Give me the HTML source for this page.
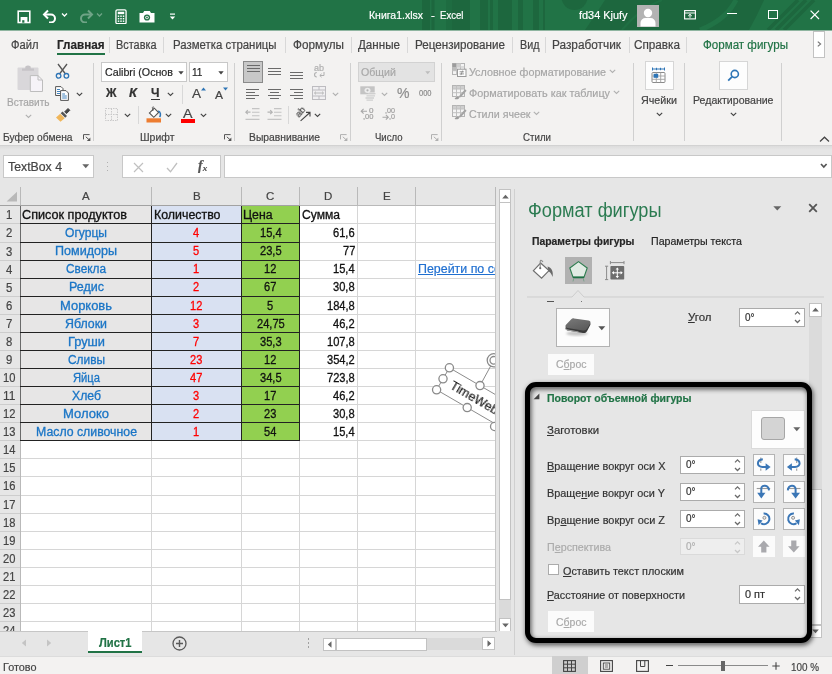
<!DOCTYPE html>
<html lang="ru"><head><meta charset="utf-8"><title>Книга1.xlsx - Excel</title><style>
html,body{margin:0;padding:0}
body{width:832px;height:674px;position:relative;overflow:hidden;background:#e6e6e6;font-family:"Liberation Sans",sans-serif;font-size:11px;color:#444}
.b{position:absolute;box-sizing:border-box;display:block}
.t{position:absolute;white-space:nowrap;line-height:16px;height:16px;transform-origin:0 50%;-webkit-text-stroke:0.2px currentColor}
u{text-decoration:underline;text-underline-offset:1px}
</style></head><body>
<div class="b" style="left:0px;top:0px;width:832px;height:30px;background:#217346;"></div>
<svg class="b" style="left:400px;top:0px;" width="432" height="30" viewBox="0 0 432 30"><g fill="#1d673e"><rect x="22" y="0" width="8" height="30"/><rect x="31.5" y="0" width="3" height="30"/><rect x="46" y="0" width="6" height="30" opacity=".6"/><rect x="52" y="0" width="18" height="30"/><rect x="80" y="0" width="8" height="30"/><rect x="90" y="0" width="3" height="30"/><rect x="98" y="0" width="14" height="30"/><rect x="118" y="0" width="5" height="30"/><rect x="133" y="0" width="6" height="30"/><rect x="143" y="0" width="2" height="30"/><circle cx="174.5" cy="-3" r="13"/><path d="M205 0Q196 14 185 30H349Q357 16 364 0Z"/></g><g fill="none" stroke="#217346"><path d="M300 30Q326 20 336 0" stroke-width="5"/><path d="M222 30Q240 8 262 0" stroke-width="2" opacity=".7"/></g><g fill="none" stroke="#1d673e"><path d="M368 30L398 0M376 30L406 0M384 30L414 0" stroke-width="3.5"/></g></svg>
<svg class="b" style="left:16.5px;top:9.5px;" width="14" height="14" viewBox="0 0 14 14"><rect x="1.2" y="1.2" width="11.6" height="11.3" fill="none" stroke="#fff" stroke-width="1.6"/><rect x="3.6" y="7" width="6.8" height="5.5" fill="#fff"/><rect x="5.2" y="10.2" width="2.2" height="2.5" fill="#217346"/></svg>
<svg class="b" style="left:42px;top:9px;" width="16" height="14" viewBox="0 0 16 14"><path d="M2 5.5H9A4 4 0 0 1 9 13.5H7" fill="none" stroke="#fff" stroke-width="2"/><path d="M6 1.5L2 5.5L6 9.5" fill="none" stroke="#fff" stroke-width="2"/></svg>
<svg class="b" style="left:61px;top:12px;" width="8" height="6" viewBox="0 0 8 6"><path d="M1 1.5L3.5 4L6 1.5" fill="none" stroke="#fff" stroke-width="1.3"/></svg>
<svg class="b" style="left:78px;top:9px;" width="16" height="14" viewBox="0 0 16 14"><g opacity=".35" transform="translate(16,0) scale(-1,1)"><path d="M2 5.5H9A4 4 0 0 1 9 13.5H7" fill="none" stroke="#fff" stroke-width="2"/><path d="M6 1.5L2 5.5L6 9.5" fill="none" stroke="#fff" stroke-width="2"/></g></svg>
<svg class="b" style="left:96px;top:12px;" width="8" height="6" viewBox="0 0 8 6"><path d="M1 1.5L3.5 4L6 1.5" fill="none" stroke="#fff" stroke-width="1.3" opacity=".35"/></svg>
<svg class="b" style="left:114.5px;top:8.5px;" width="12" height="15.7" viewBox="0 0 13 17"><rect x="1" y="1" width="11" height="15" rx="1.5" fill="none" stroke="#fff" stroke-width="1.4"/><rect x="3" y="3" width="7" height="2.6" fill="#fff"/><g fill="#fff"><rect x="3" y="7" width="1.6" height="1.6"/><rect x="5.7" y="7" width="1.6" height="1.6"/><rect x="8.4" y="7" width="1.6" height="1.6"/><rect x="3" y="9.7" width="1.6" height="1.6"/><rect x="5.7" y="9.7" width="1.6" height="1.6"/><rect x="8.4" y="9.7" width="1.6" height="1.6"/><rect x="3" y="12.4" width="1.6" height="1.6"/><rect x="5.7" y="12.4" width="1.6" height="1.6"/><rect x="8.4" y="12.4" width="1.6" height="1.6"/></g></svg>
<svg class="b" style="left:139px;top:10px;" width="16" height="13" viewBox="0 0 16 13"><path d="M0.5 3H4L5.2 1H10.8L12 3H15.5V12.5H0.5Z" fill="#fff"/><circle cx="8" cy="7.5" r="3.1" fill="#217346"/><circle cx="8" cy="7.5" r="1.7" fill="#fff"/><circle cx="8" cy="7.5" r="0.9" fill="#217346"/></svg>
<svg class="b" style="left:169px;top:12.5px;" width="8" height="8" viewBox="0 0 8 8"><rect x="1" y="0.5" width="5" height="1.2" fill="#fff"/><path d="M0.8 3.5H6.2L3.5 6.5Z" fill="#fff"/></svg>
<span class="t" style="left:368.50px;top:7.00px;color:#fff;font-size:11.5px;font-weight:400;transform:scaleX(0.9119);">Книга1.xlsx</span>
<span class="t" style="left:430.50px;top:7.00px;color:#fff;font-size:11.5px;font-weight:400;transform:scaleX(1.0020);">-</span>
<span class="t" style="left:439.50px;top:7.00px;color:#fff;font-size:11.5px;font-weight:400;transform:scaleX(0.8356);">Excel</span>
<span class="t" style="left:578.50px;top:7.00px;color:#fff;font-size:11.5px;font-weight:400;transform:scaleX(0.9481);">fd34 Kjufy</span>
<div class="b" style="left:637px;top:5px;width:21.5px;height:21.5px;background:#b3b3b3;"></div>
<svg class="b" style="left:637px;top:5px;" width="22" height="22" viewBox="0 0 22 22"><circle cx="11" cy="8" r="4.2" fill="#fff"/><path d="M3.5 21.5V18A5 5 0 0 1 8.5 13H13.5A5 5 0 0 1 18.5 18V21.5Z" fill="#fff"/></svg>
<svg class="b" style="left:683.5px;top:9.8px;" width="12" height="10" viewBox="0 0 12 10"><rect x="0.6" y="0.6" width="10.8" height="8.3" fill="none" stroke="#fff" stroke-width="1.1"/><path d="M0.6 3H11.4" stroke="#fff" stroke-width="1"/><path d="M6 7.8V4.4M4.2 6L6 4.3L7.8 6" fill="none" stroke="#fff" stroke-width="1"/></svg>
<div class="b" style="left:727px;top:13px;width:9.5px;height:1.2px;background:#fff;"></div>
<div class="b" style="left:768px;top:10.3px;width:9.8px;height:8.8px;border:1.2px solid #fff;"></div>
<svg class="b" style="left:809px;top:9px;" width="12" height="12" viewBox="0 0 12 12"><path d="M1.6 1.6L10 10M10 1.6L1.6 10" stroke="#fff" stroke-width="1.2"/></svg>
<div class="b" style="left:0px;top:30px;width:832px;height:115px;background:#f3f2f1;"></div>
<div class="b" style="left:0px;top:30px;width:832px;height:1px;background:#8fb5a0;"></div>
<span class="t" style="left:11.00px;top:37.00px;color:#444444;font-size:12px;font-weight:400;transform:scaleX(0.9317);">Файл</span>
<span class="t" style="left:57.00px;top:37.00px;color:#262626;font-size:12px;font-weight:700;transform:scaleX(0.9731);">Главная</span>
<span class="t" style="left:116.00px;top:37.00px;color:#444444;font-size:12px;font-weight:400;transform:scaleX(0.9079);">Вставка</span>
<span class="t" style="left:173.00px;top:37.00px;color:#444444;font-size:12px;font-weight:400;transform:scaleX(0.9506);">Разметка страницы</span>
<span class="t" style="left:293.00px;top:37.00px;color:#444444;font-size:12px;font-weight:400;transform:scaleX(0.9767);">Формулы</span>
<span class="t" style="left:358.00px;top:37.00px;color:#444444;font-size:12px;font-weight:400;transform:scaleX(0.9686);">Данные</span>
<span class="t" style="left:415.00px;top:37.00px;color:#444444;font-size:12px;font-weight:400;transform:scaleX(0.9712);">Рецензирование</span>
<span class="t" style="left:520.00px;top:37.00px;color:#444444;font-size:12px;font-weight:400;transform:scaleX(0.8978);">Вид</span>
<span class="t" style="left:552.00px;top:37.00px;color:#444444;font-size:12px;font-weight:400;transform:scaleX(0.9859);">Разработчик</span>
<span class="t" style="left:634.00px;top:37.00px;color:#444444;font-size:12px;font-weight:400;transform:scaleX(0.9771);">Справка</span>
<span class="t" style="left:703.00px;top:37.00px;color:#217346;font-size:12px;font-weight:400;transform:scaleX(0.9651);">Формат фигуры</span>
<div class="b" style="left:57px;top:53px;width:47.5px;height:2px;background:#217346;"></div>
<div class="b" style="left:109px;top:37px;width:1px;height:16px;background:#d8d8d8;"></div>
<div class="b" style="left:163px;top:37px;width:1px;height:16px;background:#d8d8d8;"></div>
<div class="b" style="left:285px;top:37px;width:1px;height:16px;background:#d8d8d8;"></div>
<div class="b" style="left:351px;top:37px;width:1px;height:16px;background:#d8d8d8;"></div>
<div class="b" style="left:407px;top:37px;width:1px;height:16px;background:#d8d8d8;"></div>
<div class="b" style="left:512px;top:37px;width:1px;height:16px;background:#d8d8d8;"></div>
<div class="b" style="left:545px;top:37px;width:1px;height:16px;background:#d8d8d8;"></div>
<div class="b" style="left:629px;top:37px;width:1px;height:16px;background:#d8d8d8;"></div>
<div class="b" style="left:686px;top:37px;width:1px;height:16px;background:#d8d8d8;"></div>
<div class="b" style="left:813px;top:31px;width:12px;height:27px;background:#fff;border:1px solid #c2c2c2;"></div>
<svg class="b" style="left:817px;top:40.5px;" width="5" height="6" viewBox="0 0 5 6"><path d="M0.8 0.6L3.6 3L0.8 5.4" fill="none" stroke="#777" stroke-width="1.2"/></svg>
<svg class="b" style="left:17px;top:65px;" width="27" height="28" viewBox="0 0 27 28"><rect x="0.5" y="2.5" width="21" height="22.5" rx="1" fill="#d9d7da"/><path d="M5 5.8V3.6H8.3V1.6Q11 -0.6 13.7 1.6V3.6H17V5.8Z" fill="#c6c4c7"/><path d="M13.3 10.6H21L25.5 15V26.5H13.3Z" fill="#f6f3f8" stroke="#bdbdbd" stroke-width="1"/><path d="M21 10.6V15H25.5" fill="none" stroke="#bdbdbd" stroke-width="1"/></svg>
<span class="t" style="left:7.00px;top:94.00px;color:#a6a6a6;font-size:11px;font-weight:400;transform:scaleX(0.9112);">Вставить</span>
<svg class="b" style="left:24.5px;top:114px;" width="7" height="5" viewBox="0 0 7 5"><path d="M0.8 0.8L3.5 3.5L6.2 0.8" fill="none" stroke="#b0b0b0" stroke-width="1.1"/></svg>
<svg class="b" style="left:55px;top:63px;" width="15" height="16" viewBox="0 0 15 16"><path d="M3 1L10.5 11M12 1L4.5 11" stroke="#555" stroke-width="1.3" fill="none"/><circle cx="3.6" cy="12.8" r="2.3" fill="none" stroke="#2e75b6" stroke-width="1.3"/><circle cx="11.4" cy="12.8" r="2.3" fill="none" stroke="#2e75b6" stroke-width="1.3"/></svg>
<svg class="b" style="left:55px;top:86px;" width="15" height="15" viewBox="0 0 15 15"><path d="M0.6 0.6H6L8 2.6V9.5H0.6Z" fill="#fff" stroke="#555" stroke-width="1"/><path d="M2 3.5H5M2 5.5H6.5M2 7.5H6.5" stroke="#2e75b6" stroke-width="0.9"/><path d="M5.6 4.6H11L13.4 7V14.4H5.6Z" fill="#fff" stroke="#555" stroke-width="1"/><path d="M7.2 8H10M7.2 10H11.8M7.2 12H11.8" stroke="#2e75b6" stroke-width="0.9"/></svg>
<svg class="b" style="left:75.5px;top:91.5px;" width="7" height="5" viewBox="0 0 7 5"><path d="M0.8 0.8L3.5 3.5L6.2 0.8" fill="none" stroke="#444444" stroke-width="1.1"/></svg>
<svg class="b" style="left:55px;top:107px;" width="16" height="16" viewBox="0 0 16 16"><path d="M9.5 5L13 1.5L14.8 3.3L11.3 6.8" fill="#444" stroke="#444" stroke-width="1"/><path d="M7.5 4.5L12 9L10.2 10.8L5.7 6.3Z" fill="#555"/><path d="M5.2 6.8L9.7 11.3L5.5 14.8L1 10.5Z" fill="#f0b65a"/></svg>
<span class="t" style="left:3.00px;top:129.00px;color:#444444;font-size:11px;font-weight:400;transform:scaleX(0.9298);">Буфер обмена</span>
<svg class="b" style="left:83px;top:134.0px;" width="8" height="8" viewBox="0 0 8 8"><path d="M0.5 5.4V0.6H6.6" fill="none" stroke="#555" stroke-width="1"/><path d="M2.8 2.8L6.2 5.8" stroke="#555" stroke-width="1"/><path d="M7.4 3.6V7H3.8Z" fill="#555"/></svg>
<div class="b" style="left:93px;top:63px;width:1px;height:78px;background:#d0d0d0;"></div>
<div class="b" style="left:101px;top:62px;width:85.5px;height:20px;background:#fff;border:1px solid #c8c8c8;"></div>
<span class="t" style="left:104.50px;top:64.00px;color:#262626;font-size:11.5px;font-weight:400;transform:scaleX(0.9293);">Calibri (Основ</span>
<svg class="b" style="left:177.5px;top:70.5px;" width="6" height="4" viewBox="0 0 6 4"><path d="M0.3 0.3H5.7L3 3.4Z" fill="#444"/></svg>
<div class="b" style="left:189px;top:62px;width:38.5px;height:20px;background:#fff;border:1px solid #c8c8c8;"></div>
<span class="t" style="left:192.00px;top:64.00px;color:#262626;font-size:11.5px;font-weight:400;transform:scaleX(0.8784);">11</span>
<svg class="b" style="left:217.5px;top:70.5px;" width="6" height="4" viewBox="0 0 6 4"><path d="M0.3 0.3H5.7L3 3.4Z" fill="#444"/></svg>
<span class="t" style="left:106.00px;top:85.00px;color:#333;font-size:12px;font-weight:700;transform:scaleX(0.9669);">Ж</span>
<span class="t" style="left:128.50px;top:85.00px;color:#333;font-size:12px;font-weight:700;font-style:italic;transform:scaleX(1.0825);">К</span>
<span class="t" style="left:151.00px;top:84.50px;color:#333;font-size:12px;font-weight:700;transform:scaleX(1.0074);">Ч</span>
<div class="b" style="left:150.5px;top:98.5px;width:9.5px;height:1.5px;background:#333;"></div>
<svg class="b" style="left:167px;top:91.5px;" width="7" height="5" viewBox="0 0 7 5"><path d="M0.8 0.8L3.5 3.5L6.2 0.8" fill="none" stroke="#444444" stroke-width="1.1"/></svg>
<div class="b" style="left:182px;top:85px;width:1px;height:19px;background:#d8d8d8;"></div>
<span class="t" style="left:191.50px;top:86.00px;color:#444;font-size:13px;font-weight:400;transform:scaleX(1.0378);">A</span>
<svg class="b" style="left:200.5px;top:86.5px;" width="5" height="4" viewBox="0 0 5 4"><path d="M0 3.6L2.5 0.4L5 3.6Z" fill="#2e75b6"/></svg>
<span class="t" style="left:214.50px;top:86.50px;color:#444;font-size:11px;font-weight:400;transform:scaleX(1.0894);">A</span>
<svg class="b" style="left:222.5px;top:86.5px;" width="5" height="4" viewBox="0 0 5 4"><path d="M0 0.4H5L2.5 3.6Z" fill="#2e75b6"/></svg>
<svg class="b" style="left:105px;top:108px;" width="13" height="13" viewBox="0 0 13 13"><rect x="0.5" y="0.5" width="12" height="12" fill="none" stroke="#c9c9c9" stroke-width="1" stroke-dasharray="1.5 1"/><path d="M6.5 0.5V12.5M0.5 6.5H12.5" stroke="#c9c9c9" stroke-width="1" stroke-dasharray="1.5 1"/></svg>
<svg class="b" style="left:124px;top:113px;" width="7" height="5" viewBox="0 0 7 5"><path d="M0.8 0.8L3.5 3.5L6.2 0.8" fill="none" stroke="#444444" stroke-width="1.1"/></svg>
<div class="b" style="left:138px;top:106px;width:1px;height:18px;background:#d8d8d8;"></div>
<svg class="b" style="left:146px;top:105px;" width="16" height="18" viewBox="0 0 16 18"><path d="M4.3 7.2L8.3 3.2L12.6 7.5L7.8 12.3L3.4 8Z" fill="#fff" stroke="#555" stroke-width="1.1"/><path d="M6.8 2.2V6" stroke="#555" stroke-width="1.1"/><path d="M6.2 2.6Q6.8 0.8 8 2.4" fill="none" stroke="#777" stroke-width="0.9"/><path d="M12.2 6C14.8 7 15 10 13.6 12" fill="none" stroke="#2e75b6" stroke-width="1.5"/><rect x="0.5" y="13.3" width="14.5" height="4.2" fill="#ed7d31"/></svg>
<svg class="b" style="left:165px;top:113px;" width="7" height="5" viewBox="0 0 7 5"><path d="M0.8 0.8L3.5 3.5L6.2 0.8" fill="none" stroke="#444444" stroke-width="1.1"/></svg>
<span class="t" style="left:183.00px;top:105.50px;color:#444;font-size:13px;font-weight:400;transform:scaleX(1.0955);">A</span>
<div class="b" style="left:180.5px;top:118.5px;width:14.5px;height:4px;background:#ff0000;"></div>
<svg class="b" style="left:200px;top:113px;" width="7" height="5" viewBox="0 0 7 5"><path d="M0.8 0.8L3.5 3.5L6.2 0.8" fill="none" stroke="#444444" stroke-width="1.1"/></svg>
<span class="t" style="left:140.00px;top:129.00px;color:#444444;font-size:11px;font-weight:400;transform:scaleX(0.9530);">Шрифт</span>
<svg class="b" style="left:224px;top:134.0px;" width="8" height="8" viewBox="0 0 8 8"><path d="M0.5 5.4V0.6H6.6" fill="none" stroke="#555" stroke-width="1"/><path d="M2.8 2.8L6.2 5.8" stroke="#555" stroke-width="1"/><path d="M7.4 3.6V7H3.8Z" fill="#555"/></svg>
<div class="b" style="left:234px;top:63px;width:1px;height:78px;background:#d0d0d0;"></div>
<div class="b" style="left:243px;top:61px;width:20px;height:21.5px;background:#c8c8c8;border:1px solid #8a8a8a;"></div>
<svg class="b" style="left:246.5px;top:64.5px;" width="13" height="9" viewBox="0 0 13 9"><rect x="0" y="0" width="13" height="1" fill="#6a6a6a"/><rect x="0" y="3" width="13" height="1" fill="#6a6a6a"/><rect x="0" y="6" width="13" height="1" fill="#6a6a6a"/></svg>
<svg class="b" style="left:268px;top:68px;" width="13" height="9" viewBox="0 0 13 9"><rect x="0" y="0" width="13" height="1" fill="#6a6a6a"/><rect x="0" y="3" width="13" height="1" fill="#6a6a6a"/><rect x="0" y="6" width="13" height="1" fill="#6a6a6a"/></svg>
<svg class="b" style="left:290px;top:72px;" width="13" height="9" viewBox="0 0 13 9"><rect x="0" y="0" width="13" height="1" fill="#6a6a6a"/><rect x="0" y="3" width="13" height="1" fill="#6a6a6a"/><rect x="0" y="6" width="13" height="1" fill="#6a6a6a"/></svg>
<span class="t" style="left:313.50px;top:59.50px;color:#b0b0b0;font-size:9px;font-weight:400;transform:scaleX(1.0020);">ab</span>
<svg class="b" style="left:313px;top:71px;" width="12" height="8" viewBox="0 0 12 8"><path d="M3.8 1.5A2.2 2.2 0 1 0 3.8 6" fill="none" stroke="#b0b0b0" stroke-width="1.1"/><path d="M11 1V4.5H7M8.6 2.8L6.8 4.5L8.6 6.2" fill="none" stroke="#b0b0b0" stroke-width="1"/></svg>
<svg class="b" style="left:246px;top:88.5px;" width="13" height="12" viewBox="0 0 13 12"><rect x="0" y="0" width="13" height="1" fill="#6a6a6a"/><rect x="0" y="3" width="9" height="1" fill="#6a6a6a"/><rect x="0" y="6" width="13" height="1" fill="#6a6a6a"/><rect x="0" y="9" width="9" height="1" fill="#6a6a6a"/></svg>
<svg class="b" style="left:268px;top:88.5px;" width="13" height="12" viewBox="0 0 13 12"><rect x="0.0" y="0" width="13" height="1" fill="#6a6a6a"/><rect x="2.0" y="3" width="9" height="1" fill="#6a6a6a"/><rect x="0.0" y="6" width="13" height="1" fill="#6a6a6a"/><rect x="2.0" y="9" width="9" height="1" fill="#6a6a6a"/></svg>
<svg class="b" style="left:290px;top:88.5px;" width="13" height="12" viewBox="0 0 13 12"><rect x="0" y="0" width="13" height="1" fill="#6a6a6a"/><rect x="4" y="3" width="9" height="1" fill="#6a6a6a"/><rect x="0" y="6" width="13" height="1" fill="#6a6a6a"/><rect x="4" y="9" width="9" height="1" fill="#6a6a6a"/></svg>
<svg class="b" style="left:312px;top:86px;" width="14" height="14" viewBox="0 0 14 14"><rect x="0.5" y="0.5" width="13" height="13" fill="#f0eff1" stroke="#bdbcc0" stroke-width="1"/><path d="M0.5 4H13.5M0.5 10H13.5M7 0.5V4M7 10V13.5" stroke="#bdbcc0" stroke-width="1"/><path d="M2.5 7H11.5M4 5.6L2.5 7L4 8.4M10 5.6L11.5 7L10 8.4" fill="none" stroke="#b8b8b8" stroke-width="1"/></svg>
<svg class="b" style="left:332px;top:91.5px;" width="7" height="5" viewBox="0 0 7 5"><path d="M0.8 0.8L3.5 3.5L6.2 0.8" fill="none" stroke="#b0b0b0" stroke-width="1.1"/></svg>
<svg class="b" style="left:245px;top:108px;" width="15" height="12" viewBox="0 0 15 12"><path d="M7 0.6H14.5M7 4.2H14.5M7 7.8H14.5M0.5 11.4H14.5" stroke="#c4c4c4" stroke-width="1.1"/><path d="M5.5 4.2H0.8M2.8 2.2L0.8 4.2L2.8 6.2" fill="none" stroke="#b4b4b4" stroke-width="1.2"/></svg>
<svg class="b" style="left:267px;top:108px;" width="15" height="12" viewBox="0 0 15 12"><path d="M7 0.6H14.5M7 4.2H14.5M7 7.8H14.5M0.5 11.4H14.5" stroke="#c4c4c4" stroke-width="1.1"/><path d="M0.5 4.2H5.2M3.2 2.2L5.2 4.2L3.2 6.2" fill="none" stroke="#b4b4b4" stroke-width="1.2"/></svg>
<div class="b" style="left:288px;top:106px;width:1px;height:18px;background:#d8d8d8;"></div>
<svg class="b" style="left:293px;top:105px;" width="19" height="18" viewBox="0 0 19 18"><path d="M7.6 15.8L16.4 8M13 7.4H17V11.4" fill="none" stroke="#444" stroke-width="1.1"/></svg>
<span class="t" style="left:295px;top:104px;font-size:9.5px;color:#444;transform-origin:50% 50%;transform:rotate(-50deg);will-change:transform">ab</span>
<svg class="b" style="left:314px;top:113px;" width="7" height="5" viewBox="0 0 7 5"><path d="M0.8 0.8L3.5 3.5L6.2 0.8" fill="none" stroke="#444444" stroke-width="1.1"/></svg>
<span class="t" style="left:249.00px;top:129.00px;color:#444444;font-size:11px;font-weight:400;transform:scaleX(0.9377);">Выравнивание</span>
<svg class="b" style="left:339.5px;top:134.0px;" width="8" height="8" viewBox="0 0 8 8"><path d="M0.5 5.4V0.6H6.6" fill="none" stroke="#b0b0b0" stroke-width="1"/><path d="M2.8 2.8L6.2 5.8" stroke="#b0b0b0" stroke-width="1"/><path d="M7.4 3.6V7H3.8Z" fill="#b0b0b0"/></svg>
<div class="b" style="left:350px;top:63px;width:1px;height:78px;background:#d0d0d0;"></div>
<div class="b" style="left:357.5px;top:61.5px;width:77px;height:20.5px;background:#e3e3e3;border:1px solid #d2d2d2;"></div>
<span class="t" style="left:361.00px;top:64.00px;color:#a8a8a8;font-size:11.5px;font-weight:400;transform:scaleX(0.9249);">Общий</span>
<svg class="b" style="left:425px;top:70.5px;" width="5.4" height="4" viewBox="0 0 5.4 4"><path d="M0.3 0.3H5.1L2.7 3.2Z" fill="#bdbdbd"/></svg>
<svg class="b" style="left:360px;top:86px;" width="16" height="15" viewBox="0 0 16 15"><rect x="0.3" y="0.3" width="14.4" height="8" fill="#c4c4c4"/><ellipse cx="7.5" cy="4.3" rx="3" ry="2.6" fill="#ececec"/><circle cx="7.5" cy="4.3" r="1.1" fill="#b4b4b4"/><rect x="8" y="6.5" width="7.5" height="2" fill="#f3f2f1"/><path d="M8 7.6H15.5M6.5 9.8H15M5.5 12H14M6.5 14.2H13" stroke="#cfcfcf" stroke-width="1.3"/></svg>
<svg class="b" style="left:381px;top:91.5px;" width="7" height="5" viewBox="0 0 7 5"><path d="M0.8 0.8L3.5 3.5L6.2 0.8" fill="none" stroke="#b0b0b0" stroke-width="1.1"/></svg>
<span class="t" style="left:396.50px;top:85.00px;color:#8e8e8e;font-size:14px;font-weight:400;transform:scaleX(1.0038);">%</span>
<span class="t" style="left:418.50px;top:85.00px;color:#8a8a8a;font-size:9px;font-weight:400;transform:scaleX(0.8316);">000</span>
<span class="t" style="left:368.50px;top:103.20px;color:#a0a0a0;font-size:8px;font-weight:400;transform:scaleX(1.0105);">0</span>
<span class="t" style="left:362.50px;top:109.30px;color:#a0a0a0;font-size:8px;font-weight:400;transform:scaleX(0.9438);">,00</span>
<svg class="b" style="left:360px;top:108px;" width="8" height="7" viewBox="0 0 8 7"><path d="M7 3.2H1.2M3.6 0.8L1.2 3.2L3.6 5.6" fill="none" stroke="#a8a8a8" stroke-width="1.1"/></svg>
<span class="t" style="left:385.00px;top:103.20px;color:#a0a0a0;font-size:8px;font-weight:400;transform:scaleX(0.8989);">,00</span>
<span class="t" style="left:389.00px;top:109.30px;color:#a0a0a0;font-size:8px;font-weight:400;transform:scaleX(0.8993);">,0</span>
<svg class="b" style="left:381.5px;top:114.2px;" width="8" height="7" viewBox="0 0 8 7"><path d="M0.5 3.2H6.3M3.9 0.8L6.3 3.2L3.9 5.6" fill="none" stroke="#a8a8a8" stroke-width="1.1"/></svg>
<span class="t" style="left:375.00px;top:129.00px;color:#444444;font-size:11px;font-weight:400;transform:scaleX(0.8691);">Число</span>
<svg class="b" style="left:431px;top:134.0px;" width="8" height="8" viewBox="0 0 8 8"><path d="M0.5 5.4V0.6H6.6" fill="none" stroke="#b0b0b0" stroke-width="1"/><path d="M2.8 2.8L6.2 5.8" stroke="#b0b0b0" stroke-width="1"/><path d="M7.4 3.6V7H3.8Z" fill="#b0b0b0"/></svg>
<div class="b" style="left:441px;top:63px;width:1px;height:78px;background:#d0d0d0;"></div>
<svg class="b" style="left:452px;top:63px;" width="15" height="15" viewBox="0 0 15 15"><rect x="0.5" y="0.5" width="12" height="11" fill="#f4f4f4" stroke="#b4b4b4" stroke-width="1"/><path d="M0.5 4H12.5M0.5 7.7H12.5M4.5 0.5V11.5M8.5 0.5V11.5" stroke="#c4c4c4" stroke-width="1"/><rect x="0.5" y="0.5" width="4" height="3.5" fill="#9c9c9c"/><rect x="0.5" y="4" width="4" height="3.7" fill="#bcbcbc"/><rect x="4.5" y="0.5" width="4" height="3.5" fill="#cfcfcf"/><rect x="5.5" y="6.2" width="8.5" height="7.3" fill="#fcfcfc" stroke="#9a9a9a" stroke-width="1"/><path d="M7.6 8.8H11.9M7.6 10.9H11.9M10.6 7.6L8.9 12.1" stroke="#8a8a8a" stroke-width="0.9"/></svg>
<span class="t" style="left:469.00px;top:63.60px;color:#a6a6a6;font-size:11.5px;font-weight:400;transform:scaleX(0.9364);">Условное форматирование</span>
<svg class="b" style="left:608.5px;top:69px;" width="7" height="5" viewBox="0 0 7 5"><path d="M0.8 0.8L3.5 3.5L6.2 0.8" fill="none" stroke="#b0b0b0" stroke-width="1.1"/></svg>
<svg class="b" style="left:452px;top:84.5px;" width="15" height="15" viewBox="0 0 15 15"><rect x="0.5" y="0.5" width="12" height="11" fill="#f4f4f4" stroke="#b4b4b4" stroke-width="1"/><rect x="1" y="1" width="11" height="3" fill="#cfcfcf"/><path d="M0.5 4H12.5M0.5 7.7H12.5M4.5 0.5V11.5M8.5 0.5V11.5" stroke="#c0c0c0" stroke-width="1"/><path d="M13 4.2L14.6 5.8L9 12L7 12.8L7.6 10.6Z" fill="#a4a4a4"/><path d="M2.6 14C3.6 11.6 5.8 11.2 7 12.2C7.8 13.8 5 15 2.6 14Z" fill="#9c9c9c"/></svg>
<span class="t" style="left:469.00px;top:84.60px;color:#a6a6a6;font-size:11.5px;font-weight:400;transform:scaleX(0.9424);">Форматировать как таблицу</span>
<svg class="b" style="left:612.5px;top:90px;" width="7" height="5" viewBox="0 0 7 5"><path d="M0.8 0.8L3.5 3.5L6.2 0.8" fill="none" stroke="#b0b0b0" stroke-width="1.1"/></svg>
<svg class="b" style="left:452px;top:105px;" width="15" height="15" viewBox="0 0 15 15"><rect x="0.5" y="0.5" width="12" height="11" fill="#f4f4f4" stroke="#b4b4b4" stroke-width="1"/><rect x="1" y="1" width="11" height="3" fill="#cfcfcf"/><path d="M0.5 4H12.5M0.5 7.7H12.5M4.5 0.5V11.5M8.5 0.5V11.5" stroke="#c0c0c0" stroke-width="1"/><path d="M13 4.2L14.6 5.8L9 12L7 12.8L7.6 10.6Z" fill="#a4a4a4"/><path d="M2.6 14C3.6 11.6 5.8 11.2 7 12.2C7.8 13.8 5 15 2.6 14Z" fill="#9c9c9c"/></svg>
<span class="t" style="left:469.00px;top:105.60px;color:#a6a6a6;font-size:11.5px;font-weight:400;transform:scaleX(0.9266);">Стили ячеек</span>
<svg class="b" style="left:532.5px;top:111px;" width="7" height="5" viewBox="0 0 7 5"><path d="M0.8 0.8L3.5 3.5L6.2 0.8" fill="none" stroke="#b0b0b0" stroke-width="1.1"/></svg>
<span class="t" style="left:523.00px;top:129.00px;color:#444444;font-size:11px;font-weight:400;transform:scaleX(0.8832);">Стили</span>
<div class="b" style="left:633px;top:63px;width:1px;height:78px;background:#d0d0d0;"></div>
<div class="b" style="left:644.5px;top:61px;width:29px;height:29px;background:#fdfdfd;border:1px solid #d6d6d6;"></div>
<svg class="b" style="left:651px;top:67px;" width="16" height="17" viewBox="0 0 16 17"><path d="M1.5 2H13.5M1.5 0.5V3.5M13.5 0.5V3.5M5.5 0.8V3.2M9.5 0.8V3.2" stroke="#2e75b6" stroke-width="1"/><rect x="1" y="5.5" width="13" height="10" rx="1" fill="#fff" stroke="#8a8a8a" stroke-width="1"/><path d="M1 9H14M1 12.3H14M5.3 5.5V15.5M9.7 5.5V15.5" stroke="#a0a0a0" stroke-width="0.9"/><rect x="2.6" y="6.8" width="4.6" height="4" fill="#2e75b6"/></svg>
<span class="t" style="left:641.00px;top:92.00px;color:#444444;font-size:11.5px;font-weight:400;transform:scaleX(0.9332);">Ячейки</span>
<svg class="b" style="left:655.5px;top:111.5px;" width="7" height="5" viewBox="0 0 7 5"><path d="M0.8 0.8L3.5 3.5L6.2 0.8" fill="none" stroke="#444444" stroke-width="1.1"/></svg>
<div class="b" style="left:684px;top:63px;width:1px;height:78px;background:#d0d0d0;"></div>
<div class="b" style="left:719px;top:61px;width:29px;height:29px;background:#fdfdfd;border:1px solid #d6d6d6;"></div>
<svg class="b" style="left:727px;top:69px;" width="13" height="13" viewBox="0 0 13 13"><circle cx="7.8" cy="5" r="3.6" fill="none" stroke="#2e75b6" stroke-width="1.6"/><path d="M5.2 7.6L1.2 11.6" stroke="#2e75b6" stroke-width="1.8"/></svg>
<span class="t" style="left:693.00px;top:92.00px;color:#444444;font-size:11.5px;font-weight:400;transform:scaleX(0.9189);">Редактирование</span>
<svg class="b" style="left:729.5px;top:111.5px;" width="7" height="5" viewBox="0 0 7 5"><path d="M0.8 0.8L3.5 3.5L6.2 0.8" fill="none" stroke="#444444" stroke-width="1.1"/></svg>
<div class="b" style="left:781px;top:63px;width:1px;height:78px;background:#d0d0d0;"></div>
<svg class="b" style="left:818.5px;top:136px;" width="11" height="7" viewBox="0 0 11 7"><path d="M1 5.5L5.5 1.2L10 5.5" fill="none" stroke="#444" stroke-width="1.2"/></svg>
<div class="b" style="left:0px;top:145px;width:832px;height:1px;background:#d2d2d2;"></div>
<div class="b" style="left:0px;top:146px;width:832px;height:4px;background:linear-gradient(#dcdcdc,#e6e6e6);"></div>
<div class="b" style="left:3px;top:155px;width:91px;height:22.5px;background:#fff;border:1px solid #c8c8c8;"></div>
<span class="t" style="left:8.00px;top:158.50px;color:#444;font-size:12px;font-weight:400;transform:scaleX(1.0246);">TextBox 4</span>
<svg class="b" style="left:82px;top:164px;" width="8" height="5" viewBox="0 0 8 5"><path d="M0.3 0.3H7.2L3.75 4.2Z" fill="#666"/></svg>
<div class="b" style="left:106.5px;top:161.5px;width:1.5px;height:1.5px;background:#b0b0b0;"></div>
<div class="b" style="left:106.5px;top:165.5px;width:1.5px;height:1.5px;background:#b0b0b0;"></div>
<div class="b" style="left:106.5px;top:169.5px;width:1.5px;height:1.5px;background:#b0b0b0;"></div>
<div class="b" style="left:121.5px;top:155px;width:99px;height:22.5px;background:#fff;border:1px solid #c8c8c8;"></div>
<svg class="b" style="left:133px;top:161.5px;" width="11" height="11" viewBox="0 0 11 11"><path d="M1 1L10 10M10 1L1 10" stroke="#c0c0c0" stroke-width="1.2"/></svg>
<svg class="b" style="left:166px;top:161.5px;" width="12" height="11" viewBox="0 0 12 11"><path d="M1 6L4.5 9.8L11 1" fill="none" stroke="#c0c0c0" stroke-width="1.3"/></svg>
<span class="t" style="left:198.00px;top:158.00px;color:#555;font-size:12px;font-weight:400;transform:scaleX(1.0020);"><b style="font-family:'Liberation Serif',serif;font-size:14px;font-style:italic">f</b><b style="font-size:9px;font-family:'Liberation Serif',serif;font-style:italic;position:relative;top:1px">x</b></span>
<div class="b" style="left:224px;top:155px;width:607.5px;height:22.5px;background:#fff;border:1px solid #c8c8c8;"></div>
<svg class="b" style="left:819.5px;top:163px;" width="8" height="6" viewBox="0 0 8 6"><path d="M1 1L3.8 4L6.6 1" fill="none" stroke="#555" stroke-width="1.7"/></svg>
<div class="b" style="left:0px;top:187px;width:496px;height:444px;background:#fff;"></div>
<div class="b" style="left:0px;top:187px;width:496px;height:18px;background:#e6e6e6;"></div>
<div class="b" style="left:0px;top:187px;width:20px;height:444px;background:#e6e6e6;"></div>
<svg class="b" style="left:2px;top:190px;" width="16" height="14" viewBox="0 0 16 14"><path d="M15 1.8V11.6H4.6Z" fill="#b8b8b8"/></svg>
<span class="t" style="left:82.16px;top:188.00px;color:#444;font-size:11.5px;font-weight:400;transform:scaleX(1.0020);">A</span>
<span class="t" style="left:192.66px;top:188.00px;color:#444;font-size:11.5px;font-weight:400;transform:scaleX(1.0020);">B</span>
<span class="t" style="left:266.34px;top:188.00px;color:#444;font-size:11.5px;font-weight:400;transform:scaleX(1.0020);">C</span>
<span class="t" style="left:324.34px;top:188.00px;color:#444;font-size:11.5px;font-weight:400;transform:scaleX(1.0020);">D</span>
<span class="t" style="left:382.66px;top:188.00px;color:#444;font-size:11.5px;font-weight:400;transform:scaleX(1.0020);">E</span>
<div class="b" style="left:20px;top:205px;width:131px;height:235px;background:#e7e6e6;"></div>
<div class="b" style="left:151px;top:205px;width:90px;height:235px;background:#d9e1f2;"></div>
<div class="b" style="left:241px;top:205px;width:58px;height:235px;background:#92d050;"></div>
<div class="b" style="left:151px;top:205px;width:1px;height:426px;background:#d6d6d6;"></div>
<div class="b" style="left:241px;top:205px;width:1px;height:426px;background:#d6d6d6;"></div>
<div class="b" style="left:299px;top:205px;width:1px;height:426px;background:#d6d6d6;"></div>
<div class="b" style="left:357px;top:205px;width:1px;height:426px;background:#d6d6d6;"></div>
<div class="b" style="left:415px;top:205px;width:1px;height:426px;background:#d6d6d6;"></div>
<div class="b" style="left:495px;top:205px;width:1px;height:426px;background:#c6c6c6;"></div>
<div class="b" style="left:20px;top:223px;width:475px;height:1px;background:#d6d6d6;"></div>
<div class="b" style="left:20px;top:242px;width:475px;height:1px;background:#d6d6d6;"></div>
<div class="b" style="left:20px;top:260px;width:475px;height:1px;background:#d6d6d6;"></div>
<div class="b" style="left:20px;top:278px;width:475px;height:1px;background:#d6d6d6;"></div>
<div class="b" style="left:20px;top:296px;width:475px;height:1px;background:#d6d6d6;"></div>
<div class="b" style="left:20px;top:314px;width:475px;height:1px;background:#d6d6d6;"></div>
<div class="b" style="left:20px;top:332px;width:475px;height:1px;background:#d6d6d6;"></div>
<div class="b" style="left:20px;top:350px;width:475px;height:1px;background:#d6d6d6;"></div>
<div class="b" style="left:20px;top:368px;width:475px;height:1px;background:#d6d6d6;"></div>
<div class="b" style="left:20px;top:386px;width:475px;height:1px;background:#d6d6d6;"></div>
<div class="b" style="left:20px;top:404px;width:475px;height:1px;background:#d6d6d6;"></div>
<div class="b" style="left:20px;top:422px;width:475px;height:1px;background:#d6d6d6;"></div>
<div class="b" style="left:20px;top:440px;width:475px;height:1px;background:#d6d6d6;"></div>
<div class="b" style="left:20px;top:458px;width:475px;height:1px;background:#d6d6d6;"></div>
<div class="b" style="left:20px;top:476px;width:475px;height:1px;background:#d6d6d6;"></div>
<div class="b" style="left:20px;top:495px;width:475px;height:1px;background:#d6d6d6;"></div>
<div class="b" style="left:20px;top:513px;width:475px;height:1px;background:#d6d6d6;"></div>
<div class="b" style="left:20px;top:531px;width:475px;height:1px;background:#d6d6d6;"></div>
<div class="b" style="left:20px;top:549px;width:475px;height:1px;background:#d6d6d6;"></div>
<div class="b" style="left:20px;top:567px;width:475px;height:1px;background:#d6d6d6;"></div>
<div class="b" style="left:20px;top:585px;width:475px;height:1px;background:#d6d6d6;"></div>
<div class="b" style="left:20px;top:603px;width:475px;height:1px;background:#d6d6d6;"></div>
<div class="b" style="left:20px;top:621px;width:475px;height:1px;background:#d6d6d6;"></div>
<div class="b" style="left:20px;top:187px;width:1px;height:18px;background:#b9b9b9;"></div>
<div class="b" style="left:151px;top:187px;width:1px;height:18px;background:#b9b9b9;"></div>
<div class="b" style="left:241px;top:187px;width:1px;height:18px;background:#b9b9b9;"></div>
<div class="b" style="left:299px;top:187px;width:1px;height:18px;background:#b9b9b9;"></div>
<div class="b" style="left:357px;top:187px;width:1px;height:18px;background:#b9b9b9;"></div>
<div class="b" style="left:415px;top:187px;width:1px;height:18px;background:#b9b9b9;"></div>
<div class="b" style="left:495px;top:187px;width:1px;height:18px;background:#b9b9b9;"></div>
<div class="b" style="left:0px;top:204.5px;width:496px;height:1px;background:#b9b9b9;"></div>
<div class="b" style="left:20px;top:205px;width:1px;height:426px;background:#b9b9b9;"></div>
<div class="b" style="left:0px;top:223px;width:20px;height:1px;background:#cdcdcd;"></div>
<div class="b" style="left:0px;top:242px;width:20px;height:1px;background:#cdcdcd;"></div>
<div class="b" style="left:0px;top:260px;width:20px;height:1px;background:#cdcdcd;"></div>
<div class="b" style="left:0px;top:278px;width:20px;height:1px;background:#cdcdcd;"></div>
<div class="b" style="left:0px;top:296px;width:20px;height:1px;background:#cdcdcd;"></div>
<div class="b" style="left:0px;top:314px;width:20px;height:1px;background:#cdcdcd;"></div>
<div class="b" style="left:0px;top:332px;width:20px;height:1px;background:#cdcdcd;"></div>
<div class="b" style="left:0px;top:350px;width:20px;height:1px;background:#cdcdcd;"></div>
<div class="b" style="left:0px;top:368px;width:20px;height:1px;background:#cdcdcd;"></div>
<div class="b" style="left:0px;top:386px;width:20px;height:1px;background:#cdcdcd;"></div>
<div class="b" style="left:0px;top:404px;width:20px;height:1px;background:#cdcdcd;"></div>
<div class="b" style="left:0px;top:422px;width:20px;height:1px;background:#cdcdcd;"></div>
<div class="b" style="left:0px;top:440px;width:20px;height:1px;background:#cdcdcd;"></div>
<div class="b" style="left:0px;top:458px;width:20px;height:1px;background:#cdcdcd;"></div>
<div class="b" style="left:0px;top:476px;width:20px;height:1px;background:#cdcdcd;"></div>
<div class="b" style="left:0px;top:495px;width:20px;height:1px;background:#cdcdcd;"></div>
<div class="b" style="left:0px;top:513px;width:20px;height:1px;background:#cdcdcd;"></div>
<div class="b" style="left:0px;top:531px;width:20px;height:1px;background:#cdcdcd;"></div>
<div class="b" style="left:0px;top:549px;width:20px;height:1px;background:#cdcdcd;"></div>
<div class="b" style="left:0px;top:567px;width:20px;height:1px;background:#cdcdcd;"></div>
<div class="b" style="left:0px;top:585px;width:20px;height:1px;background:#cdcdcd;"></div>
<div class="b" style="left:0px;top:603px;width:20px;height:1px;background:#cdcdcd;"></div>
<div class="b" style="left:0px;top:621px;width:20px;height:1px;background:#cdcdcd;"></div>
<span class="t" style="left:6.00px;top:207.40px;color:#444;font-size:12px;font-weight:400;transform:scaleX(0.9421);">1</span>
<span class="t" style="left:6.00px;top:225.47px;color:#444;font-size:12px;font-weight:400;transform:scaleX(0.9421);">2</span>
<span class="t" style="left:6.00px;top:243.54px;color:#444;font-size:12px;font-weight:400;transform:scaleX(0.9421);">3</span>
<span class="t" style="left:6.00px;top:261.61px;color:#444;font-size:12px;font-weight:400;transform:scaleX(0.9421);">4</span>
<span class="t" style="left:6.00px;top:279.68px;color:#444;font-size:12px;font-weight:400;transform:scaleX(0.9421);">5</span>
<span class="t" style="left:6.00px;top:297.75px;color:#444;font-size:12px;font-weight:400;transform:scaleX(0.9421);">6</span>
<span class="t" style="left:6.00px;top:315.82px;color:#444;font-size:12px;font-weight:400;transform:scaleX(0.9421);">7</span>
<span class="t" style="left:6.00px;top:333.89px;color:#444;font-size:12px;font-weight:400;transform:scaleX(0.9421);">8</span>
<span class="t" style="left:6.00px;top:351.96px;color:#444;font-size:12px;font-weight:400;transform:scaleX(0.9421);">9</span>
<span class="t" style="left:3.30px;top:370.03px;color:#444;font-size:12px;font-weight:400;transform:scaleX(0.9282);">10</span>
<span class="t" style="left:3.30px;top:388.10px;color:#444;font-size:12px;font-weight:400;transform:scaleX(0.9945);">11</span>
<span class="t" style="left:3.30px;top:406.17px;color:#444;font-size:12px;font-weight:400;transform:scaleX(0.9282);">12</span>
<span class="t" style="left:3.30px;top:424.24px;color:#444;font-size:12px;font-weight:400;transform:scaleX(0.9282);">13</span>
<span class="t" style="left:3.30px;top:442.31px;color:#444;font-size:12px;font-weight:400;transform:scaleX(0.9282);">14</span>
<span class="t" style="left:3.30px;top:460.38px;color:#444;font-size:12px;font-weight:400;transform:scaleX(0.9282);">15</span>
<span class="t" style="left:3.30px;top:478.45px;color:#444;font-size:12px;font-weight:400;transform:scaleX(0.9282);">16</span>
<span class="t" style="left:3.30px;top:496.52px;color:#444;font-size:12px;font-weight:400;transform:scaleX(0.9282);">17</span>
<span class="t" style="left:3.30px;top:514.59px;color:#444;font-size:12px;font-weight:400;transform:scaleX(0.9282);">18</span>
<span class="t" style="left:3.30px;top:532.66px;color:#444;font-size:12px;font-weight:400;transform:scaleX(0.9282);">19</span>
<span class="t" style="left:3.30px;top:550.73px;color:#444;font-size:12px;font-weight:400;transform:scaleX(0.9282);">20</span>
<span class="t" style="left:3.30px;top:568.80px;color:#444;font-size:12px;font-weight:400;transform:scaleX(0.9282);">21</span>
<span class="t" style="left:3.30px;top:586.87px;color:#444;font-size:12px;font-weight:400;transform:scaleX(0.9282);">22</span>
<span class="t" style="left:3.30px;top:604.94px;color:#444;font-size:12px;font-weight:400;transform:scaleX(0.9282);">23</span>
<div class="b" style="left:0;top:622px;width:20px;height:9px;overflow:hidden"><span class="t" style="left:3.3px;top:1.0px;font-size:12px;color:#444;transform:scaleX(.93)">24</span></div>
<div class="b" style="left:151px;top:205px;width:1px;height:236px;background:#222;"></div>
<div class="b" style="left:241px;top:205px;width:1px;height:236px;background:#222;"></div>
<div class="b" style="left:299px;top:205px;width:1px;height:236px;background:#222;"></div>
<div class="b" style="left:20px;top:205px;width:1px;height:236px;background:#6a6a6a;"></div>
<div class="b" style="left:20px;top:223px;width:280px;height:1px;background:#222;"></div>
<div class="b" style="left:20px;top:242px;width:280px;height:1px;background:#222;"></div>
<div class="b" style="left:20px;top:260px;width:280px;height:1px;background:#222;"></div>
<div class="b" style="left:20px;top:278px;width:280px;height:1px;background:#222;"></div>
<div class="b" style="left:20px;top:296px;width:280px;height:1px;background:#222;"></div>
<div class="b" style="left:20px;top:314px;width:280px;height:1px;background:#222;"></div>
<div class="b" style="left:20px;top:332px;width:280px;height:1px;background:#222;"></div>
<div class="b" style="left:20px;top:350px;width:280px;height:1px;background:#222;"></div>
<div class="b" style="left:20px;top:368px;width:280px;height:1px;background:#222;"></div>
<div class="b" style="left:20px;top:386px;width:280px;height:1px;background:#222;"></div>
<div class="b" style="left:20px;top:404px;width:280px;height:1px;background:#222;"></div>
<div class="b" style="left:20px;top:422px;width:280px;height:1px;background:#222;"></div>
<div class="b" style="left:20px;top:440px;width:280px;height:1px;background:#222;"></div>
<div class="b" style="left:0px;top:204.5px;width:300px;height:1px;background:#a2a2a2;"></div>
<span class="t" style="left:22.00px;top:207.20px;color:#111;font-size:12px;font-weight:400;transform:scaleX(1.0538);-webkit-text-stroke:0.3px currentColor;">Список продуктов</span>
<span class="t" style="left:153.50px;top:207.20px;color:#111;font-size:12px;font-weight:400;transform:scaleX(1.0318);-webkit-text-stroke:0.3px currentColor;">Количество</span>
<span class="t" style="left:243.00px;top:207.20px;color:#111;font-size:12px;font-weight:400;transform:scaleX(1.0222);-webkit-text-stroke:0.3px currentColor;">Цена</span>
<span class="t" style="left:301.50px;top:207.20px;color:#111;font-size:12px;font-weight:400;transform:scaleX(1.0075);-webkit-text-stroke:0.3px currentColor;">Сумма</span>
<span class="t" style="left:65.00px;top:225.27px;color:#1a75c6;font-size:12px;font-weight:400;transform:scaleX(1.0060);-webkit-text-stroke:0.3px currentColor;">Огурцы</span>
<span class="t" style="left:193.43px;top:225.27px;color:#ff0000;font-size:12px;font-weight:400;transform:scaleX(0.9196);-webkit-text-stroke:0.3px currentColor;">4</span>
<span class="t" style="left:259.68px;top:225.27px;color:#111;font-size:12px;font-weight:400;transform:scaleX(0.9268);-webkit-text-stroke:0.3px currentColor;">15,4</span>
<span class="t" style="left:333.25px;top:225.27px;color:#111;font-size:12px;font-weight:400;transform:scaleX(0.9268);-webkit-text-stroke:0.3px currentColor;">61,6</span>
<span class="t" style="left:55.00px;top:243.34px;color:#1a75c6;font-size:12px;font-weight:400;transform:scaleX(1.0467);-webkit-text-stroke:0.3px currentColor;">Помидоры</span>
<span class="t" style="left:193.43px;top:243.34px;color:#ff0000;font-size:12px;font-weight:400;transform:scaleX(0.9196);-webkit-text-stroke:0.3px currentColor;">5</span>
<span class="t" style="left:259.68px;top:243.34px;color:#111;font-size:12px;font-weight:400;transform:scaleX(0.9268);-webkit-text-stroke:0.3px currentColor;">23,5</span>
<span class="t" style="left:342.60px;top:243.34px;color:#111;font-size:12px;font-weight:400;transform:scaleX(0.9207);-webkit-text-stroke:0.3px currentColor;">77</span>
<span class="t" style="left:66.00px;top:261.41px;color:#1a75c6;font-size:12px;font-weight:400;transform:scaleX(0.9842);-webkit-text-stroke:0.3px currentColor;">Свекла</span>
<span class="t" style="left:193.43px;top:261.41px;color:#ff0000;font-size:12px;font-weight:400;transform:scaleX(0.9196);-webkit-text-stroke:0.3px currentColor;">1</span>
<span class="t" style="left:264.35px;top:261.41px;color:#111;font-size:12px;font-weight:400;transform:scaleX(0.9207);-webkit-text-stroke:0.3px currentColor;">12</span>
<span class="t" style="left:333.25px;top:261.41px;color:#111;font-size:12px;font-weight:400;transform:scaleX(0.9268);-webkit-text-stroke:0.3px currentColor;">15,4</span>
<span class="t" style="left:68.50px;top:279.48px;color:#1a75c6;font-size:12px;font-weight:400;transform:scaleX(1.0419);-webkit-text-stroke:0.3px currentColor;">Редис</span>
<span class="t" style="left:193.43px;top:279.48px;color:#ff0000;font-size:12px;font-weight:400;transform:scaleX(0.9196);-webkit-text-stroke:0.3px currentColor;">2</span>
<span class="t" style="left:264.35px;top:279.48px;color:#111;font-size:12px;font-weight:400;transform:scaleX(0.9207);-webkit-text-stroke:0.3px currentColor;">67</span>
<span class="t" style="left:333.25px;top:279.48px;color:#111;font-size:12px;font-weight:400;transform:scaleX(0.9268);-webkit-text-stroke:0.3px currentColor;">30,8</span>
<span class="t" style="left:60.00px;top:297.55px;color:#1a75c6;font-size:12px;font-weight:400;transform:scaleX(1.0795);-webkit-text-stroke:0.3px currentColor;">Морковь</span>
<span class="t" style="left:190.35px;top:297.55px;color:#ff0000;font-size:12px;font-weight:400;transform:scaleX(0.9207);-webkit-text-stroke:0.3px currentColor;">12</span>
<span class="t" style="left:267.43px;top:297.55px;color:#111;font-size:12px;font-weight:400;transform:scaleX(0.9196);-webkit-text-stroke:0.3px currentColor;">5</span>
<span class="t" style="left:327.10px;top:297.55px;color:#111;font-size:12px;font-weight:400;transform:scaleX(0.9257);-webkit-text-stroke:0.3px currentColor;">184,8</span>
<span class="t" style="left:65.00px;top:315.62px;color:#1a75c6;font-size:12px;font-weight:400;transform:scaleX(1.0303);-webkit-text-stroke:0.3px currentColor;">Яблоки</span>
<span class="t" style="left:193.43px;top:315.62px;color:#ff0000;font-size:12px;font-weight:400;transform:scaleX(0.9196);-webkit-text-stroke:0.3px currentColor;">3</span>
<span class="t" style="left:256.60px;top:315.62px;color:#111;font-size:12px;font-weight:400;transform:scaleX(0.9257);-webkit-text-stroke:0.3px currentColor;">24,75</span>
<span class="t" style="left:333.25px;top:315.62px;color:#111;font-size:12px;font-weight:400;transform:scaleX(0.9268);-webkit-text-stroke:0.3px currentColor;">46,2</span>
<span class="t" style="left:67.50px;top:333.69px;color:#1a75c6;font-size:12px;font-weight:400;transform:scaleX(1.0662);-webkit-text-stroke:0.3px currentColor;">Груши</span>
<span class="t" style="left:193.43px;top:333.69px;color:#ff0000;font-size:12px;font-weight:400;transform:scaleX(0.9196);-webkit-text-stroke:0.3px currentColor;">7</span>
<span class="t" style="left:259.68px;top:333.69px;color:#111;font-size:12px;font-weight:400;transform:scaleX(0.9268);-webkit-text-stroke:0.3px currentColor;">35,3</span>
<span class="t" style="left:327.10px;top:333.69px;color:#111;font-size:12px;font-weight:400;transform:scaleX(0.9257);-webkit-text-stroke:0.3px currentColor;">107,8</span>
<span class="t" style="left:67.50px;top:351.76px;color:#1a75c6;font-size:12px;font-weight:400;transform:scaleX(0.9900);-webkit-text-stroke:0.3px currentColor;">Сливы</span>
<span class="t" style="left:190.35px;top:351.76px;color:#ff0000;font-size:12px;font-weight:400;transform:scaleX(0.9207);-webkit-text-stroke:0.3px currentColor;">23</span>
<span class="t" style="left:264.35px;top:351.76px;color:#111;font-size:12px;font-weight:400;transform:scaleX(0.9207);-webkit-text-stroke:0.3px currentColor;">12</span>
<span class="t" style="left:327.10px;top:351.76px;color:#111;font-size:12px;font-weight:400;transform:scaleX(0.9257);-webkit-text-stroke:0.3px currentColor;">354,2</span>
<span class="t" style="left:72.50px;top:369.83px;color:#1a75c6;font-size:12px;font-weight:400;transform:scaleX(0.9335);-webkit-text-stroke:0.3px currentColor;">Яйца</span>
<span class="t" style="left:190.35px;top:369.83px;color:#ff0000;font-size:12px;font-weight:400;transform:scaleX(0.9207);-webkit-text-stroke:0.3px currentColor;">47</span>
<span class="t" style="left:259.68px;top:369.83px;color:#111;font-size:12px;font-weight:400;transform:scaleX(0.9268);-webkit-text-stroke:0.3px currentColor;">34,5</span>
<span class="t" style="left:327.10px;top:369.83px;color:#111;font-size:12px;font-weight:400;transform:scaleX(0.9257);-webkit-text-stroke:0.3px currentColor;">723,8</span>
<span class="t" style="left:71.50px;top:387.90px;color:#1a75c6;font-size:12px;font-weight:400;transform:scaleX(1.0203);-webkit-text-stroke:0.3px currentColor;">Хлеб</span>
<span class="t" style="left:193.43px;top:387.90px;color:#ff0000;font-size:12px;font-weight:400;transform:scaleX(0.9196);-webkit-text-stroke:0.3px currentColor;">3</span>
<span class="t" style="left:264.35px;top:387.90px;color:#111;font-size:12px;font-weight:400;transform:scaleX(0.9207);-webkit-text-stroke:0.3px currentColor;">17</span>
<span class="t" style="left:333.25px;top:387.90px;color:#111;font-size:12px;font-weight:400;transform:scaleX(0.9268);-webkit-text-stroke:0.3px currentColor;">46,2</span>
<span class="t" style="left:63.00px;top:405.97px;color:#1a75c6;font-size:12px;font-weight:400;transform:scaleX(1.0843);-webkit-text-stroke:0.3px currentColor;">Молоко</span>
<span class="t" style="left:193.43px;top:405.97px;color:#ff0000;font-size:12px;font-weight:400;transform:scaleX(0.9196);-webkit-text-stroke:0.3px currentColor;">2</span>
<span class="t" style="left:264.35px;top:405.97px;color:#111;font-size:12px;font-weight:400;transform:scaleX(0.9207);-webkit-text-stroke:0.3px currentColor;">23</span>
<span class="t" style="left:333.25px;top:405.97px;color:#111;font-size:12px;font-weight:400;transform:scaleX(0.9268);-webkit-text-stroke:0.3px currentColor;">30,8</span>
<span class="t" style="left:35.50px;top:424.04px;color:#1a75c6;font-size:12px;font-weight:400;transform:scaleX(1.0251);-webkit-text-stroke:0.3px currentColor;">Масло сливочное</span>
<span class="t" style="left:193.43px;top:424.04px;color:#ff0000;font-size:12px;font-weight:400;transform:scaleX(0.9196);-webkit-text-stroke:0.3px currentColor;">1</span>
<span class="t" style="left:264.35px;top:424.04px;color:#111;font-size:12px;font-weight:400;transform:scaleX(0.9207);-webkit-text-stroke:0.3px currentColor;">54</span>
<span class="t" style="left:333.25px;top:424.04px;color:#111;font-size:12px;font-weight:400;transform:scaleX(0.9268);-webkit-text-stroke:0.3px currentColor;">15,4</span>
<div class="b" style="left:416px;top:260px;width:79px;height:18px;overflow:hidden"><span class="t" style="left:1.8px;top:1.2px;font-size:13px;color:#1f6fd0;text-decoration:underline;transform:scaleX(0.955)">Перейти по ссылке</span></div>
<div class="b" style="left:415px;top:340px;width:80px;height:100px;overflow:hidden"><svg width="80" height="100" viewBox="415 340 80 100" style="position:absolute;left:0;top:0"><path d="M449.4 367.8L531.5 415.6L518.7 437.5L436.6 389.8Z" fill="#fff" stroke="#8c8c8c" stroke-width="1"/><path d="M480.0 385.6L493.8 360.3" stroke="#8c8c8c" stroke-width="1"/><g fill="#fff" stroke="#8a8a8a" stroke-width="1.3"><circle cx="449.4" cy="367.8" r="4.1"/><circle cx="443.0" cy="378.8" r="4.1"/><circle cx="436.6" cy="389.8" r="4.1"/><circle cx="480.0" cy="385.6" r="4.1"/><circle cx="467.2" cy="407.6" r="4.1"/><circle cx="494.6" cy="426.5" r="4.1"/><circle cx="493.8" cy="360.3" r="6.6"/><circle cx="493.8" cy="360.3" r="3.8"/></g></svg><span class="t" style="left:33.6px;top:36.1px;font-size:12.7px;color:#1a1a1a;transform-origin:0 12.2px;transform:rotate(30.2deg);will-change:transform">TimeWeb is the best</span></div>
<div class="b" style="left:497px;top:187px;width:16px;height:444px;background:#e6e6e6;"></div>
<div class="b" style="left:498.5px;top:600px;width:12.5px;height:18px;background:#dadada;"></div>
<div class="b" style="left:498.5px;top:202px;width:12.5px;height:398px;background:#fff;border:1px solid #c2c2c2;"></div>
<div class="b" style="left:498.5px;top:189px;width:12.5px;height:14px;background:#fff;border:1px solid #c2c2c2;"></div>
<svg class="b" style="left:501.5px;top:193.5px;" width="7" height="5" viewBox="0 0 7 5"><path d="M0.2 4.5L3.5 0.8L6.8 4.5Z" fill="#666"/></svg>
<div class="b" style="left:498.5px;top:618px;width:12.5px;height:13.5px;background:#fff;border:1px solid #c2c2c2;"></div>
<svg class="b" style="left:501.5px;top:623px;" width="7" height="5" viewBox="0 0 7 5"><path d="M0.2 0.5L3.5 4.2L6.8 0.5Z" fill="#666"/></svg>
<div class="b" style="left:0px;top:631px;width:513px;height:24px;background:#e6e6e6;"></div>
<div class="b" style="left:0px;top:631px;width:497px;height:1px;background:#c6c6c6;"></div>
<svg class="b" style="left:21px;top:639px;" width="6" height="8" viewBox="0 0 6 8"><path d="M5 0.5V7.5L0.8 4Z" fill="#c4c4c4"/></svg>
<svg class="b" style="left:46px;top:639px;" width="6" height="8" viewBox="0 0 6 8"><path d="M1 0.5V7.5L5.2 4Z" fill="#c4c4c4"/></svg>
<div class="b" style="left:88px;top:631px;width:53.5px;height:20px;background:#fff;"></div>
<div class="b" style="left:88px;top:650.5px;width:53.5px;height:2px;background:#217346;"></div>
<span class="t" style="left:98.50px;top:634.50px;color:#217346;font-size:12px;font-weight:700;transform:scaleX(0.9277);">Лист1</span>
<svg class="b" style="left:172px;top:636px;" width="15" height="15" viewBox="0 0 15 15"><circle cx="7.5" cy="7.5" r="6.5" fill="none" stroke="#5a5a5a" stroke-width="1.3"/><path d="M7.5 4V11M4 7.5H11" stroke="#5a5a5a" stroke-width="1.4"/></svg>
<div class="b" style="left:307.5px;top:638px;width:1.5px;height:1.5px;background:#a0a0a0;"></div>
<div class="b" style="left:307.5px;top:642px;width:1.5px;height:1.5px;background:#a0a0a0;"></div>
<div class="b" style="left:307.5px;top:646px;width:1.5px;height:1.5px;background:#a0a0a0;"></div>
<div class="b" style="left:323px;top:637.5px;width:13px;height:13px;background:#fff;border:1px solid #c2c2c2;"></div>
<svg class="b" style="left:327px;top:640.5px;" width="5" height="7" viewBox="0 0 5 7"><path d="M4.5 0.2V6.8L0.8 3.5Z" fill="#666"/></svg>
<div class="b" style="left:426px;top:637.5px;width:56px;height:12.5px;background:#dadada;"></div>
<div class="b" style="left:335.5px;top:637.5px;width:91px;height:13px;background:#fff;border:1px solid #c2c2c2;"></div>
<div class="b" style="left:481.5px;top:637px;width:13.5px;height:13px;background:#fff;border:1px solid #c2c2c2;"></div>
<svg class="b" style="left:486.5px;top:640px;" width="5" height="7" viewBox="0 0 5 7"><path d="M0.5 0.2V6.8L4.2 3.5Z" fill="#666"/></svg>
<div class="b" style="left:0px;top:656px;width:832px;height:18px;background:#f3f2f1;"></div>
<div class="b" style="left:0px;top:655.5px;width:832px;height:1px;background:#dcdcdc;"></div>
<span class="t" style="left:3.20px;top:659.00px;color:#444;font-size:11px;font-weight:400;transform:scaleX(0.9862);">Готово</span>
<div class="b" style="left:551.5px;top:656px;width:36px;height:18px;background:#cfcfcf;"></div>
<svg class="b" style="left:563px;top:659.5px;" width="13" height="12" viewBox="0 0 13 12"><rect x="0.6" y="0.6" width="11.8" height="10.8" fill="none" stroke="#444" stroke-width="1.1"/><path d="M4.5 0.6V11.4M8.5 0.6V11.4M0.6 4.2H12.4M0.6 7.8H12.4" stroke="#444" stroke-width="1"/></svg>
<svg class="b" style="left:599.5px;top:659.5px;" width="13" height="12" viewBox="0 0 13 12"><rect x="0.6" y="0.6" width="11.8" height="10.8" fill="none" stroke="#444" stroke-width="1.1"/><rect x="3.3" y="3" width="6.4" height="6.2" fill="none" stroke="#444" stroke-width="0.9"/><path d="M4.8 5H8.2M4.8 7H8.2" stroke="#444" stroke-width="0.8"/></svg>
<svg class="b" style="left:635.5px;top:659.5px;" width="13" height="12" viewBox="0 0 13 12"><rect x="0.6" y="0.6" width="11.8" height="10.8" fill="none" stroke="#444" stroke-width="1.1"/><path d="M4.5 0.6V6.5H8.8V0.6" fill="none" stroke="#444" stroke-width="1"/></svg>
<div class="b" style="left:665.5px;top:665px;width:7px;height:1.2px;background:#444;"></div>
<div class="b" style="left:677.5px;top:665px;width:90px;height:1px;background:#8a8a8a;"></div>
<div class="b" style="left:721px;top:660.5px;width:4px;height:10.5px;background:#666;"></div>
<svg class="b" style="left:771.5px;top:661.5px;" width="8" height="8" viewBox="0 0 8 8"><path d="M4 0.3V7.7M0.3 4H7.7" stroke="#444" stroke-width="1.1"/></svg>
<span class="t" style="left:791.00px;top:658.50px;color:#444;font-size:11px;font-weight:400;transform:scaleX(0.8973);">100 %</span>
<div class="b" style="left:513px;top:180px;width:319px;height:475px;background:#e6e6e6;"></div>
<div class="b" style="left:514px;top:189px;width:1px;height:466px;background:#d0d0d0;"></div>
<span class="t" style="left:527.50px;top:202.00px;color:#2b7b51;font-size:19.5px;font-weight:400;transform:scaleX(0.9326);line-height:24px;height:24px;margin-top:-4px;-webkit-text-stroke:0;">Формат фигуры</span>
<svg class="b" style="left:772.5px;top:205.5px;" width="9" height="5" viewBox="0 0 9 5"><path d="M0.3 0.3H8.3L4.3 4.6Z" fill="#666"/></svg>
<svg class="b" style="left:808px;top:203px;" width="10" height="10" viewBox="0 0 10 10"><path d="M1.2 1.2L8.8 8.8M8.8 1.2L1.2 8.8" stroke="#555" stroke-width="1.8"/></svg>
<span class="t" style="left:532.00px;top:233.00px;color:#262626;font-size:11px;font-weight:700;transform:scaleX(0.9439);">Параметры фигуры</span>
<span class="t" style="left:650.50px;top:233.00px;color:#262626;font-size:11px;font-weight:400;transform:scaleX(0.9660);">Параметры текста</span>
<svg class="b" style="left:531px;top:258px;" width="24" height="24" viewBox="0 0 24 24"><path d="M9.6 5L18 12.6L10.6 20.2L2.4 12.6Z" fill="#fff" stroke="#6e6e6e" stroke-width="1.2"/><path d="M9.2 9.5V3.4Q9.6 1.6 11 2.8L12 4" fill="none" stroke="#8a8a8a" stroke-width="1.1"/><circle cx="9.2" cy="10.2" r="1.1" fill="#6e6e6e"/><path d="M16.5 8.6C20.5 9.6 22.6 13.4 21.6 19C20.4 15.6 19.6 14.6 17.6 13.2Z" fill="#6a6a6a"/></svg>
<div class="b" style="left:565px;top:257px;width:27px;height:27px;background:#b1b1b1;"></div>
<svg class="b" style="left:568px;top:260px;" width="21" height="23" viewBox="0 0 21 23"><path d="M10.5 1.6L19.2 8L16 17.2H5L1.8 8Z" fill="#e1ebe4" stroke="#2c7c4e" stroke-width="1.1"/><path d="M5 17.4H16" stroke="#1e7145" stroke-width="1.8"/><path d="M5.6 19L5 21.5M15.4 19L16 21.5" stroke="#5f9a78" stroke-width="0.9" opacity=".7"/></svg>
<svg class="b" style="left:604px;top:260px;" width="22" height="22" viewBox="0 0 22 22"><path d="M2.6 6.2V19.6M1 6.2H4.2M1 19.6H4.2M6.4 2.6H20M6.4 1V4.2M20 1V4.2" stroke="#8a8a8a" stroke-width="1"/><rect x="6.4" y="6" width="13.8" height="13.6" rx="0.8" fill="#6e6e6e"/><path d="M13.3 8.6V17M9 12.8H17.6" stroke="#fff" stroke-width="1"/><path d="M13.3 7.4L11.6 9.6H15ZM13.3 18.2L11.6 16H15ZM7.8 12.8L10 11.1V14.5ZM18.8 12.8L16.6 11.1V14.5Z" fill="#fff"/></svg>
<svg class="b" style="left:527px;top:288px;" width="297" height="10" viewBox="0 0 297 10"><path d="M0 9H45L51 2.5L57 9H297" fill="none" stroke="#cdcdcd" stroke-width="1"/></svg>
<div class="b" style="left:547px;top:300.5px;width:7px;height:1.2px;background:#555;"></div>
<div class="b" style="left:580.5px;top:300.5px;width:1px;height:1px;background:#777;"></div>
<div class="b" style="left:555.5px;top:308px;width:54.5px;height:39px;background:#fcfcfc;border:1px solid #b2b2b2;"></div>
<svg class="b" style="left:563px;top:316px;" width="30" height="22" viewBox="0 0 30 22"><defs><linearGradient id="mg" x1="0" y1="0" x2="0.6" y2="1"><stop offset="0" stop-color="#7a7a7a"/><stop offset="1" stop-color="#5c5c5c"/></linearGradient><filter id="bl"><feGaussianBlur stdDeviation="1"/></filter></defs><ellipse cx="14" cy="17.5" rx="11" ry="2.2" fill="#000" opacity=".22" filter="url(#bl)"/><path d="M11 3.8L25.5 6C27.6 6.5 28 8 27 9.6L24 15.2C23 16.8 21.6 17.2 20 17L4.5 14.4C2.4 14 1.8 12.4 3 10.8L8 4.8C9 3.8 10 3.6 11 3.8Z" fill="#3a3a3a"/><path d="M3 11.5C3 12.8 3.6 13.4 4.8 13.6L15.5 15.4L15.8 16.3L4.5 14.4C2.6 14 2 12.6 3 11.5Z" fill="#a8a8a8"/><path d="M11 2.4L25.5 4.6C27.6 5 28 6.6 27 8L24 12.8C23 14.2 21.6 14.6 20 14.4L4.5 12C2.4 11.6 1.8 10.2 3 8.8L8 3.4C9 2.4 10 2.2 11 2.4Z" fill="url(#mg)"/></svg>
<svg class="b" style="left:597.5px;top:325.5px;" width="8" height="5" viewBox="0 0 8 5"><path d="M0.3 0.3H7.3L3.8 4.3Z" fill="#555"/></svg>
<span class="t" style="left:687.50px;top:308.50px;color:#333;font-size:11.5px;font-weight:400;transform:scaleX(0.9960);"><u>У</u>гол</span>
<div class="b" style="left:738.5px;top:308px;width:66px;height:19px;background:#fff;border:1px solid #ababab;"></div>
<span class="t" style="left:745.00px;top:310.10px;color:#333;font-size:10px;font-weight:400;transform:scaleX(0.9935);">0°</span>
<svg class="b" style="left:793.5px;top:310.2px;" width="7" height="14" viewBox="0 0 7 14"><path d="M1 4.4L3.5 1.9L6 4.4M1 10L3.5 12.5L6 10" fill="none" stroke="#6a6a6a" stroke-width="1.25"/></svg>
<div class="b" style="left:808.5px;top:303px;width:13.5px;height:334.5px;background:#dbdbdb;"></div>
<div class="b" style="left:808.5px;top:303px;width:13.5px;height:13.5px;background:#fff;border:1px solid #c2c2c2;"></div>
<svg class="b" style="left:811.5px;top:307px;" width="7" height="5" viewBox="0 0 7 5"><path d="M0.2 4.5L3.5 0.8L6.8 4.5Z" fill="#666"/></svg>
<div class="b" style="left:808.5px;top:489px;width:13.5px;height:135.5px;background:#fff;border:1px solid #c2c2c2;"></div>
<div class="b" style="left:808.5px;top:624.5px;width:13.5px;height:13px;background:#fff;border:1px solid #c2c2c2;"></div>
<svg class="b" style="left:811.5px;top:629px;" width="7" height="5" viewBox="0 0 7 5"><path d="M0.2 0.5L3.5 4.2L6.8 0.5Z" fill="#666"/></svg>
<div class="b" style="left:547.5px;top:353.5px;width:46.5px;height:21px;background:#fbfbfb;"></div>
<span class="t" style="left:555.50px;top:356.00px;color:#a8a8a8;font-size:11.5px;font-weight:400;transform:scaleX(0.9117);">С<u>б</u>рос</span>
<svg class="b" style="left:533.2px;top:392.8px;" width="7" height="7" viewBox="0 0 7 7"><path d="M6.4 0.6V6.2H0.6Z" fill="#444"/></svg>
<span class="t" style="left:547.00px;top:390.00px;color:#217346;font-size:11.5px;font-weight:700;transform:scaleX(0.9135);">Поворот объемной фигуры</span>
<span class="t" style="left:546.50px;top:422.00px;color:#333;font-size:11.5px;font-weight:400;transform:scaleX(0.9896);"><u>З</u>аготовки</span>
<div class="b" style="left:751px;top:410px;width:54px;height:38.5px;background:#fdfdfd;border:1px solid #dadada;"></div>
<div class="b" style="left:761px;top:417px;width:23.5px;height:23px;background:#d4d4d4;border:1px solid #a6a6a6;border-radius:3px;"></div>
<svg class="b" style="left:792.5px;top:427px;" width="8" height="5" viewBox="0 0 8 5"><path d="M0.3 0.3H7.3L3.8 4.3Z" fill="#666"/></svg>
<span class="t" style="left:546.50px;top:458.00px;color:#333;font-size:11.5px;font-weight:400;transform:scaleX(0.9494);"><u>В</u>ращение вокруг оси X</span>
<div class="b" style="left:679.5px;top:455.5px;width:65px;height:18.5px;background:#fff;border:1px solid #ababab;"></div>
<span class="t" style="left:686.00px;top:457.35px;color:#333;font-size:10px;font-weight:400;transform:scaleX(0.9935);">0°</span>
<svg class="b" style="left:733.5px;top:457.7px;" width="7" height="14" viewBox="0 0 7 14"><path d="M1 4.4L3.5 1.9L6 4.4M1 10L3.5 12.5L6 10" fill="none" stroke="#6a6a6a" stroke-width="1.25"/></svg>
<span class="t" style="left:546.50px;top:485.00px;color:#333;font-size:11.5px;font-weight:400;transform:scaleX(0.9453);">Враще<u>н</u>ие вокруг оси Y</span>
<div class="b" style="left:679.5px;top:482.5px;width:65px;height:18.5px;background:#fff;border:1px solid #ababab;"></div>
<span class="t" style="left:686.00px;top:484.35px;color:#333;font-size:10px;font-weight:400;transform:scaleX(0.9935);">0°</span>
<svg class="b" style="left:733.5px;top:484.7px;" width="7" height="14" viewBox="0 0 7 14"><path d="M1 4.4L3.5 1.9L6 4.4M1 10L3.5 12.5L6 10" fill="none" stroke="#6a6a6a" stroke-width="1.25"/></svg>
<span class="t" style="left:546.50px;top:512.00px;color:#333;font-size:11.5px;font-weight:400;transform:scaleX(0.9502);">Вр<u>а</u>щение вокруг оси Z</span>
<div class="b" style="left:679.5px;top:509.5px;width:65px;height:18.5px;background:#fff;border:1px solid #ababab;"></div>
<span class="t" style="left:686.00px;top:511.35px;color:#333;font-size:10px;font-weight:400;transform:scaleX(0.9935);">0°</span>
<svg class="b" style="left:733.5px;top:511.7px;" width="7" height="14" viewBox="0 0 7 14"><path d="M1 4.4L3.5 1.9L6 4.4M1 10L3.5 12.5L6 10" fill="none" stroke="#6a6a6a" stroke-width="1.25"/></svg>
<div class="b" style="left:753px;top:454px;width:22px;height:22px;background:#fcfcfc;border:1px solid #b4b4b4;"></div>
<svg class="b" style="left:753px;top:454px;" width="21.5" height="21" viewBox="0 0 21.5 21"><path d="M7.8 3.5V9M7.8 14.5V16.8" stroke="#9a9a9a" stroke-width="1.1"/><path d="M9.8 5.2C3.5 6 3.2 12.8 9.5 13H14" fill="none" stroke="#3a76b6" stroke-width="2"/><path d="M12.6 9.2L17.6 13L12.6 16.8Z" fill="#3a76b6"/></svg>
<div class="b" style="left:783px;top:454px;width:22px;height:22px;background:#fcfcfc;border:1px solid #b4b4b4;"></div>
<svg class="b" style="left:783px;top:454px;" width="21.5" height="21" viewBox="0 0 21.5 21"><g transform="translate(21.5 0) scale(-1 1)"><path d="M7.8 3.5V9M7.8 14.5V16.8" stroke="#9a9a9a" stroke-width="1.1"/><path d="M9.8 5.2C3.5 6 3.2 12.8 9.5 13H14" fill="none" stroke="#3a76b6" stroke-width="2"/><path d="M12.6 9.2L17.6 13L12.6 16.8Z" fill="#3a76b6"/></g></svg>
<div class="b" style="left:753px;top:481px;width:22px;height:22px;background:#fcfcfc;border:1px solid #b4b4b4;"></div>
<svg class="b" style="left:753px;top:481px;" width="21.5" height="21" viewBox="0 0 21.5 21"><path d="M3.7 7.5H17.2" stroke="#9a9a9a" stroke-width="1.1"/><path d="M8.3 13V7.5C8.5 3.5 15.5 3.5 16 9.3" fill="none" stroke="#3a76b6" stroke-width="2"/><path d="M4.2 11.8H12.4L8.3 17.6Z" fill="#3a76b6"/></svg>
<div class="b" style="left:783px;top:481px;width:22px;height:22px;background:#fcfcfc;border:1px solid #b4b4b4;"></div>
<svg class="b" style="left:783px;top:481px;" width="21.5" height="21" viewBox="0 0 21.5 21"><path d="M4 7.5H17.5" stroke="#9a9a9a" stroke-width="1.1"/><path d="M12.6 13V8C12.4 3.5 5.5 3.5 4.8 9.3" fill="none" stroke="#3a76b6" stroke-width="2"/><path d="M8.2 11.8H17L12.6 17.6Z" fill="#3a76b6"/></svg>
<div class="b" style="left:753px;top:508px;width:22px;height:22px;background:#fcfcfc;border:1px solid #b4b4b4;"></div>
<svg class="b" style="left:753px;top:508px;" width="21.5" height="21" viewBox="0 0 21.5 21"><circle cx="11.4" cy="9.8" r="1.5" fill="#e8e8e8" stroke="#8a8a8a" stroke-width="0.9"/><path d="M10.6 5.6A5.3 5.3 0 1 1 8 15.2" fill="none" stroke="#3a76b6" stroke-width="2"/><path d="M4.6 11.2L9.6 12.6L5.6 17.2Z" fill="#3a76b6"/></svg>
<div class="b" style="left:783px;top:508px;width:22px;height:22px;background:#fcfcfc;border:1px solid #b4b4b4;"></div>
<svg class="b" style="left:783px;top:508px;" width="21.5" height="21" viewBox="0 0 21.5 21"><g transform="translate(21.5 0) scale(-1 1)"><circle cx="11.4" cy="9.8" r="1.5" fill="#e8e8e8" stroke="#8a8a8a" stroke-width="0.9"/><path d="M10.6 5.6A5.3 5.3 0 1 1 8 15.2" fill="none" stroke="#3a76b6" stroke-width="2"/><path d="M4.6 11.2L9.6 12.6L5.6 17.2Z" fill="#3a76b6"/></g></svg>
<span class="t" style="left:546.50px;top:539.00px;color:#ababab;font-size:11.5px;font-weight:400;transform:scaleX(0.9320);">П<u>е</u>рспектива</span>
<div class="b" style="left:679.5px;top:537.5px;width:65px;height:17px;background:#eeeeee;border:1px solid #dadada;"></div>
<span class="t" style="left:686.00px;top:538.60px;color:#b0b0b0;font-size:10px;font-weight:400;transform:scaleX(0.9935);">0°</span>
<svg class="b" style="left:733.5px;top:539.7px;" width="7" height="14" viewBox="0 0 7 14"><path d="M1 4.4L3.5 1.9L6 4.4M1 10L3.5 12.5L6 10" fill="none" stroke="#c8c8c8" stroke-width="1.25"/></svg>
<div class="b" style="left:753px;top:536px;width:22px;height:21px;background:#fbfbfb;"></div>
<svg class="b" style="left:753px;top:536px;" width="21.5" height="21" viewBox="0 0 21.5 21"><path d="M10.8 4.5L16.6 10.8H13.4V16.5H8.2V10.8H5Z" fill="#a9a9ad"/></svg>
<div class="b" style="left:783px;top:536px;width:22px;height:21px;background:#fbfbfb;"></div>
<svg class="b" style="left:783px;top:536px;" width="21.5" height="21" viewBox="0 0 21.5 21"><path d="M10.8 16.5L16.6 10.2H13.4V4.5H8.2V10.2H5Z" fill="#a9a9ad"/></svg>
<div class="b" style="left:547.5px;top:564px;width:11.5px;height:11px;background:#fff;border:1px solid #ababab;"></div>
<span class="t" style="left:563.00px;top:562.50px;color:#333;font-size:11.5px;font-weight:400;transform:scaleX(0.9400);"><u>О</u>ставить текст плоским</span>
<span class="t" style="left:546.50px;top:586.50px;color:#333;font-size:11.5px;font-weight:400;transform:scaleX(0.9379);"><u>Р</u>асстояние от поверхности</span>
<div class="b" style="left:738.5px;top:585px;width:66px;height:19px;background:#fff;border:1px solid #ababab;"></div>
<span class="t" style="left:745.00px;top:587.10px;color:#333;font-size:10px;font-weight:400;transform:scaleX(1.0903);">0 пт</span>
<svg class="b" style="left:793.5px;top:587.2px;" width="7" height="14" viewBox="0 0 7 14"><path d="M1 4.4L3.5 1.9L6 4.4M1 10L3.5 12.5L6 10" fill="none" stroke="#6a6a6a" stroke-width="1.25"/></svg>
<div class="b" style="left:547.5px;top:611px;width:46.5px;height:20.5px;background:#fbfbfb;"></div>
<span class="t" style="left:555.50px;top:613.50px;color:#a8a8a8;font-size:11.5px;font-weight:400;transform:scaleX(0.9117);">С<u>б</u>рос</span>
<div class="b" style="left:524.5px;top:382px;width:287px;height:261px;border:5px solid #000;border-radius:11px;filter:drop-shadow(1px 2px 2.4px rgba(0,0,0,.7));"></div>
</body></html>
